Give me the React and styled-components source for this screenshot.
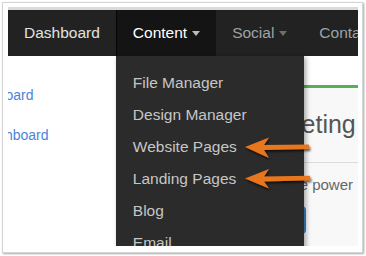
import styled, { createGlobalStyle } from 'styled-components'

const GlobalStyle = createGlobalStyle`
  html, body {
    margin: 0;
    padding: 0;
    background: #fff;
    font-family: 'Liberation Sans', Arial, sans-serif;
  }
`

const navItems = [
  { label: 'Dashboard', tone: 'normal' },
  { label: 'Content', tone: 'active', caret: true },
  { label: 'Social', tone: 'muted', caret: true },
  { label: 'Contacts', tone: 'muted' }
]

const menu = [
  'File Manager',
  'Design Manager',
  'Website Pages',
  'Landing Pages',
  'Blog',
  'Email',
  'Social'
]

const Arrow = ({ points }) => (
  <polygon points={points} fill='#e8761f' filter='url(#arrowShadow)' />
)

const App = () => {
  return (
    <>
      <GlobalStyle />
      <Frame>
        <Shot>
          <TopStrip />
          <NavBar>
            {navItems.map(item => (
              <NavItem key={item.label} $tone={item.tone}>
                {item.label}
                {item.caret && <Caret $tone={item.tone} />}
                {item.tone === 'active' && (
                  <Dropdown>
                    {menu.map(m => (
                      <MenuItem key={m}>{m}</MenuItem>
                    ))}
                  </Dropdown>
                )}
              </NavItem>
            ))}
          </NavBar>
          <Body>
            <Sidebar>
              <SideLink $shift={-43}>Dashboard</SideLink>
              <SideLink $shift={-28}>Dashboard</SideLink>
            </Sidebar>
            <Main>
              <Card>
                <Heading>Marketing</Heading>
                <Divider />
                <Lead>
                  <span>Discover the power</span>
                </Lead>
                <Button>Start</Button>
              </Card>
            </Main>
          </Body>
          {/* annotation arrows */}
          <Notes viewBox='8 7 350 239'>
            <defs>
              <filter id='arrowShadow' x='-20%' y='-40%' width='140%' height='200%'>
                <feDropShadow dx='1' dy='2' stdDeviation='1.2' floodColor='#000' floodOpacity='0.65' />
              </filter>
            </defs>
            <Arrow points='245,147 269,137.5 264,145 309,144.5 309.5,149 264,150 269,158' />
            <Arrow points='245,178.5 269,169 264,176.5 310,175.8 310.5,180.3 264,181.5 269,188.5' />
          </Notes>
        </Shot>
      </Frame>
    </>
  )
}

export default App

const Frame = styled.div`
  box-sizing: border-box;
  margin: 2px;
  width: 361px;
  height: 251px;
  padding: 4px 4px 5px 5px;
  background: #fff;
  border: 1px solid #d4d4d4;
  box-shadow: 1px 1px 2px rgba(0, 0, 0, 0.35);
`
const Shot = styled.div`
  position: relative;
  width: 350px;
  height: 239px;
  overflow: hidden;
  display: flex;
  flex-direction: column;
  background: #fff;
`
const TopStrip = styled.div`
  height: 3px;
  background: #dadada;
  flex-shrink: 0;
`
const NavBar = styled.div`
  height: 46px;
  flex-shrink: 0;
  display: flex;
  background: #222;
  position: relative;
  z-index: 2;
`
const NavItem = styled.div`
  position: relative;
  display: flex;
  align-items: center;
  padding: 0 16px;
  font-size: 15.5px;
  white-space: nowrap;
  color: ${({ $tone }) =>
    $tone === 'active' ? '#fff' : $tone === 'muted' ? '#9da3a8' : '#e2e2e2'};
  background: ${({ $tone }) => ($tone === 'active' ? '#141414' : 'transparent')};
  border-left: ${({ $tone }) => ($tone === 'active' ? '1px solid #050505' : 'none')};
`
const Caret = styled.span`
  display: inline-block;
  margin-left: 5px;
  margin-top: 1px;
  width: 0;
  height: 0;
  border-left: 4.5px solid transparent;
  border-right: 4.5px solid transparent;
  border-top: 5px solid ${({ $tone }) => ($tone === 'active' ? '#bbb' : '#6e6e6e')};
`
const Dropdown = styled.div`
  position: absolute;
  left: -1px;
  top: 100%;
  width: 188px;
  height: 220px;
  padding-top: 11px;
  box-sizing: border-box;
  background: #2b2b2b;
  box-shadow: 2px 1px 5px rgba(0, 0, 0, 0.35);
`
const MenuItem = styled.div`
  height: 32px;
  line-height: 32px;
  padding-left: 17px;
  font-size: 15.5px;
  color: #c6c6c6;
`
const Body = styled.div`
  flex: 1;
  display: flex;
  min-height: 0;
`
const Sidebar = styled.div`
  width: 108px;
  flex-shrink: 0;
  padding-top: 29px;
  overflow: hidden;
`
const SideLink = styled.div`
  margin-left: ${({ $shift }) => $shift}px;
  height: 20px;
  line-height: 20px;
  margin-bottom: 20px;
  font-size: 14px;
  color: #4b82dc;
  white-space: nowrap;
`
const Main = styled.div`
  flex: 1;
  padding: 29px 0 0 100px;
  overflow: hidden;
`
const Card = styled.div`
  height: 100%;
  box-sizing: border-box;
  border-top: 3px solid #55b154;
  background: #f8f8f8;
  padding: 0 0 0 30px;
`
const Heading = styled.div`
  margin-top: 21px;
  font-size: 25px;
  line-height: 30px;
  color: #555;
  white-space: nowrap;
`
const Divider = styled.div`
  margin-top: 23px;
  border-top: 1px solid #dcdcdc;
`
const Lead = styled.div`
  display: flex;
  justify-content: flex-end;
  margin-top: 12px;
  padding-right: 5px;
  font-size: 15px;
  line-height: 20px;
  color: #666;
  white-space: nowrap;
  span {
    flex-shrink: 0;
  }
`
const Button = styled.div`
  margin-top: 11px;
  width: 60px;
  height: 28px;
  border-radius: 4px;
  background: #428bca;
  border: 1px solid #3a7fc0;
  box-sizing: border-box;
  color: #fff;
  font-size: 14px;
  line-height: 26px;
  text-align: center;
`
const Notes = styled.svg`
  position: absolute;
  left: 0;
  top: 0;
  width: 350px;
  height: 239px;
  z-index: 5;
  pointer-events: none;
  overflow: visible;
`
